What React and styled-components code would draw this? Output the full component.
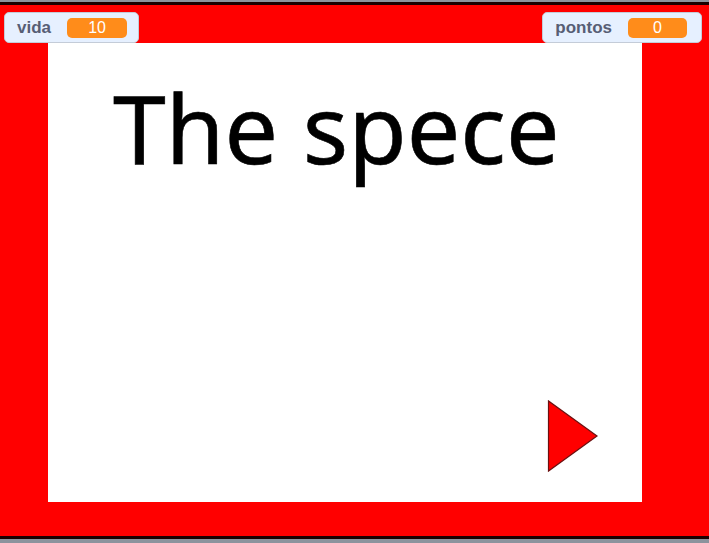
import React from "react";
import styled, { createGlobalStyle } from "styled-components";

const Global = createGlobalStyle`
  html, body {
    margin: 0;
    padding: 0;
    background: #ff0000;
    overflow: hidden;
  }
`;

const Stage = styled.div`
  position: relative;
  width: 709px;
  height: 543px;
  display: flex;
  flex-direction: column;
  background: #ff0000;
`;

const Edge = styled.div`
  height: ${(p) => p.h}px;
  background: ${(p) => p.c};
  flex-shrink: 0;
`;

const Backdrop = styled.div`
  flex: 1;
  padding: 38px 67px 34px 48px;
  display: flex;
`;

const Card = styled.div`
  position: relative;
  flex: 1;
  background: #ffffff;
`;

const Title = styled.div`
  position: absolute;
  left: 65px;
  top: 19px;
  font-family: "Noto Sans", "Open Sans", sans-serif;
  font-size: 95px;
  line-height: 130px;
  color: #000;
  white-space: nowrap;
  -webkit-text-stroke: 0.6px #000;
`;

const Arrow = styled.svg`
  position: absolute;
  right: 43px;
  bottom: 29px;
`;

const Monitor = styled.div`
  position: absolute;
  top: 12px;
  ${(p) => (p.right ? `right: ${p.right}px;` : `left: ${p.left}px;`)}
  height: 31px;
  box-sizing: border-box;
  display: flex;
  align-items: center;
  gap: 16px;
  padding: 0 ${(p) => p.pr}px 0 12px;
  background: #e6f0ff;
  border: 1px solid #c4ccd8;
  border-radius: 5px;
  font-family: "Liberation Sans", Arial, sans-serif;
  font-weight: bold;
  font-size: 17px;
`;

const Label = styled.span`
  color: #575e75;
`;

const Value = styled.span`
  width: ${(p) => p.w}px;
  height: 20px;
  border-radius: 5px;
  background: #ff8c1a;
  color: #ffffff;
  font-weight: normal;
  font-size: 16px;
  display: flex;
  align-items: center;
  justify-content: center;
`;

export default function App() {
  return (
    <>
      <Global />
      <Stage>
        <Edge h={2} c="#8c939d" />
        <Edge h={3} c="#1a0000" />
        <Backdrop>
          <Card>
            <Title>The spece</Title>
            <Arrow width="52" height="74" viewBox="0 0 52 74">
              <polygon
                points="1.5,2 1.5,72 50,37"
                fill="#ff0000"
                stroke="#6b1010"
                strokeWidth="1.2"
              />
            </Arrow>
          </Card>
        </Backdrop>
        <Edge h={3} c="#1a0000" />
        <Edge h={4} c="#8c939d" />
        <Monitor left={4} pr={11}>
          <Label>vida</Label>
          <Value w={60}>10</Value>
        </Monitor>
        <Monitor right={7} pr={14}>
          <Label>pontos</Label>
          <Value w={59}>0</Value>
        </Monitor>
      </Stage>
    </>
  );
}
